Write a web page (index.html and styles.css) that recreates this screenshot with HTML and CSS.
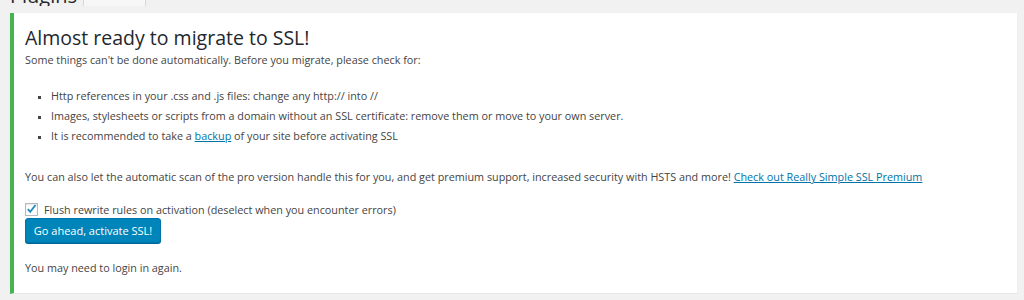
FILE: index.html
```html
<!DOCTYPE html>
<html>

	<head>
		<meta charset="UTF-8">
		<title>Plugins</title>
		<link rel="stylesheet" href="styles.css">
	</head>

	<body>
		<div class="wrap">
			<div class="page-head">
				<h1>Plugins</h1>
				<a class="add-new" href="#">Add New</a>
			</div>

			<div class="notice">
				<h2>Almost ready to migrate to SSL!</h2>
				<p>Some things can't be done automatically. Before you migrate, please check for:</p>
				<ul>
					<li>Http references in your .css and .js files: change any http:// into //</li>
					<li>Images, stylesheets or scripts from a domain without an SSL certificate: remove them or move to your own server.</li>
					<li>It is recommended to take a <a href="#">backup</a> of your site before activating SSL</li>
				</ul>
				<p class="pro">You can also let the automatic scan of the pro version handle this for you, and get premium support, increased security with HSTS and more! <a href="#">Check out Really Simple SSL Premium</a></p>
				<form>
					<label class="check">
						<span class="box">
							<svg width="12" height="12" viewBox="0 0 12 12">
								<path d="M2 6.2 L4.6 9 L10.4 1.6" fill="none" stroke="#1e8cbe" stroke-width="2"/>
							</svg>
						</span>
						Flush rewrite rules on activation (deselect when you encounter errors)
					</label>
					<button type="button" class="button">Go ahead, activate SSL!</button>
				</form>
				<p class="last">You may need to login in again.</p>
			</div>
		</div>
	</body>

</html>
```

FILE: styles.css
```css
* {
	margin: 0;
	padding: 0;
	border: 0;
	box-sizing: border-box;
}

body {
	background: #f1f1f1;
	color: #444;
	font-family: "Open Sans", "Noto Sans", sans-serif;
	font-size: 10.8px;
}

.wrap {
	padding: 0 7px 0 10px;
}

/* page title, mostly scrolled out of view */
.page-head {
	display: flex;
	align-items: flex-start;
	height: 6px;
	overflow: hidden;
	margin-bottom: 7px;
}

.page-head h1 {
	font-size: 20px;
	font-weight: 400;
	color: #23282d;
	line-height: 20px;
	margin-top: -14px;
}

.add-new {
	margin-top: -20px;
	margin-left: 6px;
	width: 63px;
	height: 25px;
	padding-top: 30px;
	border: 1px solid #d7d7d7;
	background: #f7f7f7;
	border-radius: 2px;
	color: #0073aa;
	font-size: 10.8px;
	text-align: center;
	text-decoration: none;
}

.notice {
	background: #fff;
	border-left: 4px solid #46b450;
	box-shadow: 0 1px 1px rgba(0, 0, 0, 0.06);
	border-bottom: 1px solid #e6e6e6;
	padding: 11px 11px 11px 11px;
	height: 281px;
}

.notice h2 {
	font-size: 19.5px;
	font-weight: 400;
	color: #23282d;
	line-height: 28px;
	margin-bottom: 0;
}

.notice p {
	line-height: 16px;
}

.notice ul {
	list-style: square;
	margin: 20px 0 25px 26px;
}

.notice li {
	line-height: 16px;
	margin-bottom: 4px;
}

.notice li::marker {
	font-size: 9px;
	color: #444;
}

.notice a {
	color: #0073aa;
	text-decoration: underline;
}

.pro {
	margin-bottom: 16px;
}

.check {
	display: flex;
	align-items: center;
	gap: 6px;
	height: 16px;
	margin-bottom: 1px;
}

.box {
	display: flex;
	align-items: center;
	justify-content: center;
	width: 13px;
	height: 13px;
	border: 1px solid #b4b9be;
	background: #fff;
	box-shadow: inset 0 1px 2px rgba(0, 0, 0, 0.1);
}

.button {
	display: block;
	width: 136px;
	height: 25px;
	background: #0085ba;
	border: 1px solid #0073aa;
	border-radius: 3px;
	box-shadow: 0 1px 0 #006799;
	color: #fff;
	font-family: "Open Sans", "Noto Sans", sans-serif;
	font-size: 11px;
	line-height: 22px;
	text-align: center;
}

.last {
	margin-top: 17px;
}
```
